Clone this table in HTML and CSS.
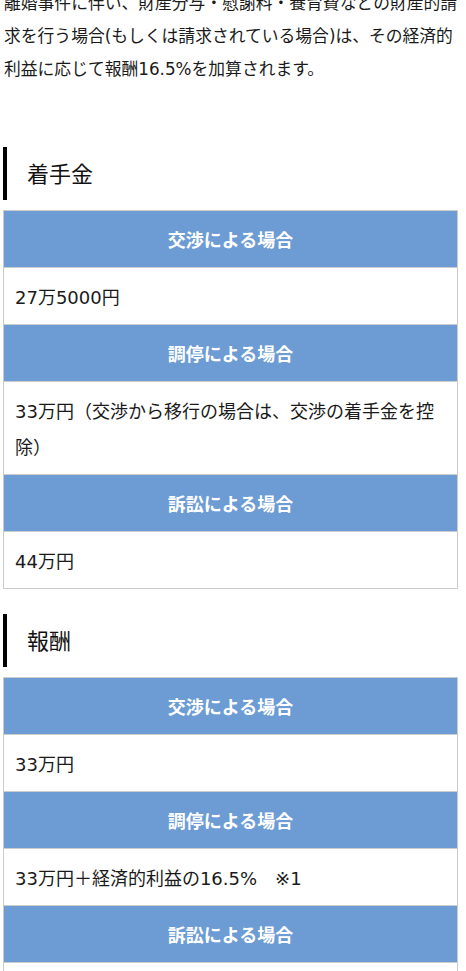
FILE: index.html
```html
<!DOCTYPE html>
<html lang="ja">
<head>
  <meta charset="UTF-8">
  <meta name="viewport" content="width=device-width, initial-scale=1.0">
  <title>離婚事件の弁護士費用</title>
  <link rel="stylesheet" href="styles.css">
</head>
<body>
  <main class="content">
    <p class="lead">離婚事件に伴い、財産分与・慰謝料・養育費などの財産的請求を行う場合(もしくは請求されている場合)は、その経済的利益に応じて報酬16.5%を加算されます。</p>

    <h2 class="fee-title">着手金</h2>
    <table class="fee-table">
      <tr><th>交渉による場合</th></tr>
      <tr><td>27万5000円</td></tr>
      <tr><th>調停による場合</th></tr>
      <tr><td>33万円（交渉から移行の場合は、交渉の着手金を控除）</td></tr>
      <tr><th>訴訟による場合</th></tr>
      <tr><td>44万円</td></tr>
    </table>

    <h2 class="fee-title">報酬</h2>
    <table class="fee-table">
      <tr><th>交渉による場合</th></tr>
      <tr><td>33万円</td></tr>
      <tr><th>調停による場合</th></tr>
      <tr><td>33万円＋経済的利益の16.5%　※1</td></tr>
      <tr><th>訴訟による場合</th></tr>
      <tr><td>44万円＋経済的利益の16.5%　※1</td></tr>
    </table>
  </main>
</body>
</html>
```

FILE: styles.css
```css
body {
  font-family: "DejaVu Sans", "Noto Sans CJK JP", sans-serif;
  color: #1a1a1a;
  background: #fff;
  margin: 0;
}
.content {
  width: 455px;
  margin-left: 3px;
}
.lead {
  margin: -13px 0 0;
  padding-left: 1px;
  font-size: 16.8px;
  line-height: 33px;
}
.fee-title {
  margin: 61px 0 10px;
  padding: 11px 0 9px 20px;
  border-left: 4px solid #000;
  font-size: 22px;
  font-weight: normal;
  line-height: 33px;
  color: #111;
}
.fee-table + .fee-title {
  margin-top: 25px;
}
.fee-table {
  width: 100%;
  border-collapse: collapse;
  font-size: 18px;
  line-height: 36px;
}
.fee-table th,
.fee-table td {
  border: 1px solid #ccc;
  padding: 12px 11px 8px;
}
.fee-table th {
  background: #6c9cd3;
  color: #fff;
  font-weight: bold;
  text-align: center;
}
.fee-table td {
  text-align: left;
}
```
